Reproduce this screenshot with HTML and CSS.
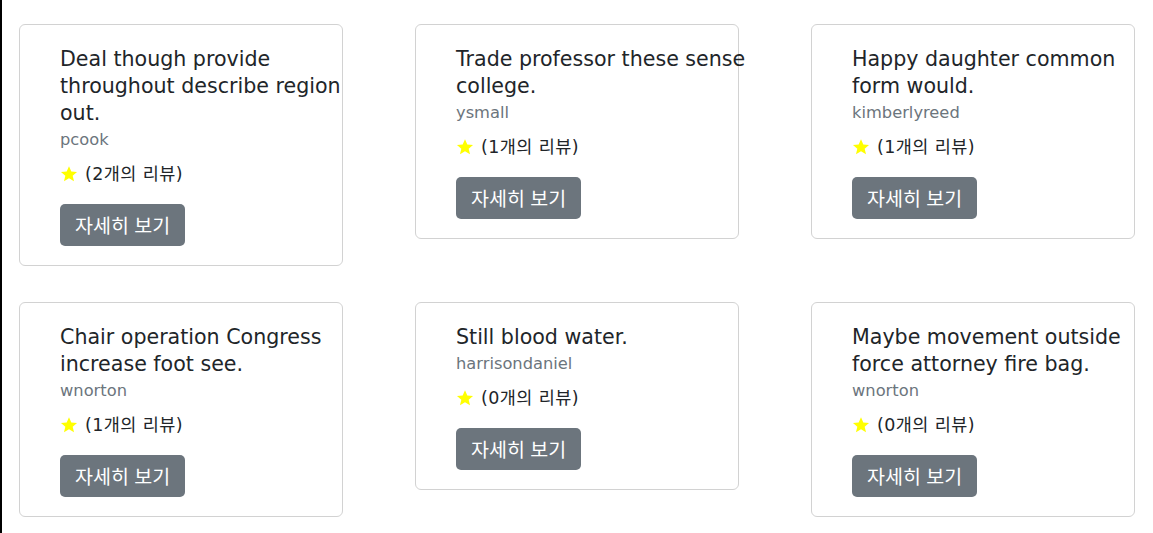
FILE: index.html
```html
<!DOCTYPE html>
<html lang="ko">
<head>
<meta charset="utf-8">
<link rel="stylesheet" href="styles.css">
</head>
<body>
<div class="grid">
  <div class="card">
    <h5 class="title">Deal though provide throughout describe region out.</h5>
    <div class="author">pcook</div>
    <div class="rating"><svg class="star" viewBox="0 0 24 24"><path d="M12 1.5l3.1 7.1 7.6.6-5.8 5 1.8 7.5L12 17.7l-6.7 4 1.8-7.5-5.8-5 7.6-.6z"/></svg><span>(2개의 리뷰)</span></div>
    <a class="btn">자세히 보기</a>
  </div>
  <div class="card">
    <h5 class="title">Trade professor these sense college.</h5>
    <div class="author">ysmall</div>
    <div class="rating"><svg class="star" viewBox="0 0 24 24"><path d="M12 1.5l3.1 7.1 7.6.6-5.8 5 1.8 7.5L12 17.7l-6.7 4 1.8-7.5-5.8-5 7.6-.6z"/></svg><span>(1개의 리뷰)</span></div>
    <a class="btn">자세히 보기</a>
  </div>
  <div class="card">
    <h5 class="title">Happy daughter common form would.</h5>
    <div class="author">kimberlyreed</div>
    <div class="rating"><svg class="star" viewBox="0 0 24 24"><path d="M12 1.5l3.1 7.1 7.6.6-5.8 5 1.8 7.5L12 17.7l-6.7 4 1.8-7.5-5.8-5 7.6-.6z"/></svg><span>(1개의 리뷰)</span></div>
    <a class="btn">자세히 보기</a>
  </div>
  <div class="card">
    <h5 class="title">Chair operation Congress increase foot see.</h5>
    <div class="author">wnorton</div>
    <div class="rating"><svg class="star" viewBox="0 0 24 24"><path d="M12 1.5l3.1 7.1 7.6.6-5.8 5 1.8 7.5L12 17.7l-6.7 4 1.8-7.5-5.8-5 7.6-.6z"/></svg><span>(1개의 리뷰)</span></div>
    <a class="btn">자세히 보기</a>
  </div>
  <div class="card">
    <h5 class="title">Still blood water.</h5>
    <div class="author">harrisondaniel</div>
    <div class="rating"><svg class="star" viewBox="0 0 24 24"><path d="M12 1.5l3.1 7.1 7.6.6-5.8 5 1.8 7.5L12 17.7l-6.7 4 1.8-7.5-5.8-5 7.6-.6z"/></svg><span>(0개의 리뷰)</span></div>
    <a class="btn">자세히 보기</a>
  </div>
  <div class="card">
    <h5 class="title">Maybe movement outside force attorney fire bag.</h5>
    <div class="author">wnorton</div>
    <div class="rating"><svg class="star" viewBox="0 0 24 24"><path d="M12 1.5l3.1 7.1 7.6.6-5.8 5 1.8 7.5L12 17.7l-6.7 4 1.8-7.5-5.8-5 7.6-.6z"/></svg><span>(0개의 리뷰)</span></div>
    <a class="btn">자세히 보기</a>
  </div>
</div>
</body>
</html>
```
FILE: styles.css
```css
html, body {
  margin: 0;
  padding: 0;
  background: #fff;
}
body {
  border-left: 2px solid #000;
  min-height: 533px;
  box-sizing: border-box;
  font-family: "DejaVu Sans", "Noto Sans CJK KR", sans-serif;
  color: #212529;
}
.grid {
  display: grid;
  grid-template-columns: repeat(3, 324px);
  column-gap: 72px;
  row-gap: 36px;
  align-items: start;
  padding: 24px 0 0 17px;
}
.card {
  border: 1px solid #d2d2d2;
  border-radius: 6px;
  padding: 21px 0 19px 40px;
  display: flex;
  flex-direction: column;
  align-items: flex-start;
}
.title {
  margin: 0 0 1px;
  width: 290px;
  font-size: 20.6px;
  font-weight: 400;
  line-height: 27px;
  color: #212529;
}
.author {
  font-size: 16.3px;
  line-height: 24px;
  color: #6c757d;
}
.rating {
  margin-top: 10px;
  display: flex;
  align-items: center;
  font-size: 17.5px;
  letter-spacing: 0.4px;
  line-height: 24px;
  color: #212529;
}
.star {
  width: 18px;
  height: 18px;
  fill: #ffff00;
  margin-right: 7px;
}
.btn {
  margin-top: 18px;
  display: inline-block;
  background: #6c757d;
  color: #fff;
  font-size: 19.5px;
  line-height: 24px;
  padding: 9px 15px;
  border-radius: 5px;
  font-family: "Noto Sans CJK KR", sans-serif;
}
```
